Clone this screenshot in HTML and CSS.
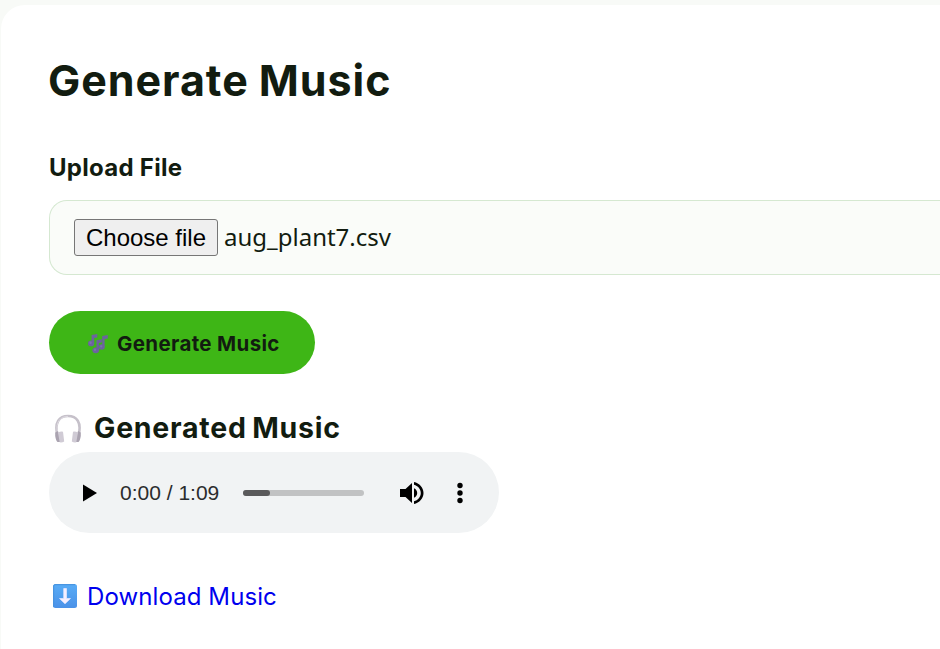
FILE: index.html
```html
<!DOCTYPE html>
<html lang="en">
<head>
<meta charset="utf-8">
<title>Generate Music</title>
<link rel="stylesheet" href="styles.css">
</head>
<body>
<main class="card">
  <h1 class="title">Generate Music</h1>
  <label class="label">Upload File</label>
  <div class="file-field">
    <button class="choose">Choose file</button>
    <span class="file-name">aug_plant7.csv</span>
  </div>
  <button class="generate">
    <svg class="notes" width="20" height="20" viewBox="0 0 20 20">
      <g fill="#6c639f">
        <path d="M3.600 1 9.300 0v3.400L6.200 4v5.400H3.600zM8.400 6.200 13.800 5.200v3.200l-2.900.6V16H8.400zM14.200 2l5.600-1v3.400l-3.200.6V13H14.200z"/>
        <ellipse cx="3.100" cy="9.400" rx="3.100" ry="2.900"/>
        <ellipse cx="7.700" cy="16.300" rx="3.300" ry="2.900"/>
        <ellipse cx="13.800" cy="13" rx="2.900" ry="2.800"/>
      </g>
      <g fill="#7c71ae"><circle cx="2.500" cy="8.800" r="1.200"/><circle cx="7" cy="15.700" r="1.200"/><circle cx="13.200" cy="12.400" r="1.100"/></g>
    </svg>
    <span class="generate-text">Generate Music</span>
  </button>
  <div class="result">
    <svg class="headphones" width="28" height="30" viewBox="0 0 28 30">
      <path d="M3.200 20C.5 8.500 5 2 14 2s13.500 6.500 10.800 18" fill="none" stroke="#c6c1ca" stroke-width="2.600"/>
      <path d="M3.400 18C1.500 8.500 6 2.400 14 2.400" fill="none" stroke="#dedae1" stroke-width="1"/>
      <path d="M1.200 18.500 4 17l3 11H3.500Q2 27 1.200 22zM26.800 18.500 24 17l-3 11h3.500q1.500-1 2.300-6z" fill="#aaa3b0"/>
      <path d="M4 18.500q3-1.500 5-.8l1.200 9.800q-2 1.200-4.500.8zM24 18.500q-3-1.500-5-.8l-1.200 9.800q2 1.200 4.500.8z" fill="#d0cbd5"/>
    </svg>
    <h2 class="result-text">Generated Music</h2>
  </div>
  <div class="player">
    <svg class="play" width="14" height="18" viewBox="0 0 14 18"><path d="M0 .5 14 9 0 17.500z"/></svg>
    <span class="time">0:00 / 1:09</span>
    <div class="track"><div class="buffered"></div></div>
    <svg class="volume" width="24" height="24" viewBox="0 0 24 24">
      <path d="M0 8v8h5.500l6.500 6V2L5.500 8zM14 7.200v9.600c2-.9 3.200-2.700 3.200-4.800S16 8.100 14 7.200z"/>
      <path d="M14 1v2.700c3.900 1 6.800 4.300 6.800 8.300s-2.900 7.300-6.800 8.300V23c5.400-1.100 9.500-5.600 9.500-11S19.400 2.100 14 1z"/>
    </svg>
    <svg class="more" width="6" height="22" viewBox="0 0 6 22"><circle cx="3" cy="3.500" r="2.700"/><circle cx="3" cy="11" r="2.700"/><circle cx="3" cy="18.500" r="2.700"/></svg>
  </div>
  <a class="download" href="#">
    <svg class="arrow" width="24" height="24" viewBox="0 0 24 24">
      <defs><linearGradient id="blue" x1="0" y1="0" x2="0" y2="1"><stop offset="0" stop-color="#58acf6"/><stop offset="1" stop-color="#4a91e8"/></linearGradient></defs>
      <rect width="24" height="24" rx="2.500" fill="url(#blue)"/>
      <path d="M.7 23V2Q.7.700 2 .7h20" fill="none" stroke="#4591dd" stroke-width="1"/>
      <path d="M10.700 4.500h2.800v10h4L12 19.800 6.500 14.500h4.200z" fill="#f6efff" stroke="#f6efff" stroke-width=".6" stroke-linejoin="round"/>
    </svg>
    <span class="download-text">Download Music</span>
  </a>
</main>
</body>
</html>
```
FILE: styles.css
```css
* { box-sizing: border-box; }
body {
  margin: 0;
  height: 649px;
  padding: 5px 0 0 1px;
  background: #f8faf7;
  color: #121c10;
  font-family: Inter, "Liberation Sans", sans-serif;
}
.card {
  display: flex;
  flex-direction: column;
  align-items: flex-start;
  height: 644px;
  padding: 51px 0 0 48px;
  border-radius: 24px 0 0 0;
  background: #fff;
}
.title {
  margin: 0 0 0 -1px;
  font-size: 43px;
  line-height: 49px;
  padding-bottom: 1px;
  font-weight: 700;
  letter-spacing: 0.950px;
  word-spacing: -1px;
  white-space: nowrap;
}
.label {
  margin-top: 47px;
  font-size: 24px;
  line-height: 30px;
  font-weight: 650;
  letter-spacing: 0.270px;
}
.file-field {
  display: flex;
  align-items: center;
  gap: 6px;
  align-self: stretch;
  height: 75px;
  margin-top: 17px;
  padding-left: 24px;
  border: 1px solid #d5e8d1;
  border-right: 0;
  border-radius: 18px 0 0 18px;
  background: #fafcf9;
}
.choose {
  width: 144px;
  height: 37px;
  padding: 0;
  border: 1px solid #767676;
  border-radius: 3px;
  background: #efefef;
  color: #000;
  font: 24px "Liberation Sans", sans-serif;
}
.file-name { padding-bottom: 2px; font: 24px/32px "Noto Sans", sans-serif; }
.generate {
  display: flex;
  align-items: center;
  gap: 9px;
  width: 266px;
  height: 63px;
  margin-top: 36px;
  padding: 3px 0 0 39px;
  border: 0;
  border-radius: 32px;
  background: #3eb616;
  color: #121c10;
  font: 700 20.500px/26px Inter, sans-serif;
  letter-spacing: 0.350px;
  white-space: nowrap;
}
.result {
  display: flex;
  align-items: center;
  gap: 12px;
  height: 36px;
  margin-top: 36px;
  padding-left: 5px;
}
.headphones { margin-top: 2px; }
.result-text { margin: 0; font-size: 28.500px; line-height: 36px; font-weight: 700; letter-spacing: 0.750px; word-spacing: -2px; white-space: nowrap; }
.player {
  display: flex;
  align-items: center;
  width: 450px;
  height: 81px;
  margin-top: 6px;
  padding-left: 34px;
  border-radius: 41px;
  background: #f1f3f4;
}
.time {
  width: 99px;
  margin-left: 23px;
  font: 21px/24px "Liberation Sans", sans-serif;
  color: #2b2c2d;
  white-space: nowrap;
}
.track { width: 121px; height: 6px; margin-left: 24px; border-radius: 3px; background: #c1c2c3; }
.buffered { width: 27px; height: 6px; border-radius: 3px; background: #5a5a5b; }
.volume { margin-left: 36px; }
.more { margin-left: 33px; }
.download {
  display: flex;
  align-items: center;
  gap: 10px;
  height: 32px;
  margin-top: 47px;
  padding-left: 4px;
  color: #0000ee;
  text-decoration: none;
}
.download-text { padding-top: 2px; font-size: 24px; line-height: 32px; font-weight: 370; letter-spacing: 0.100px; white-space: nowrap; }
```
